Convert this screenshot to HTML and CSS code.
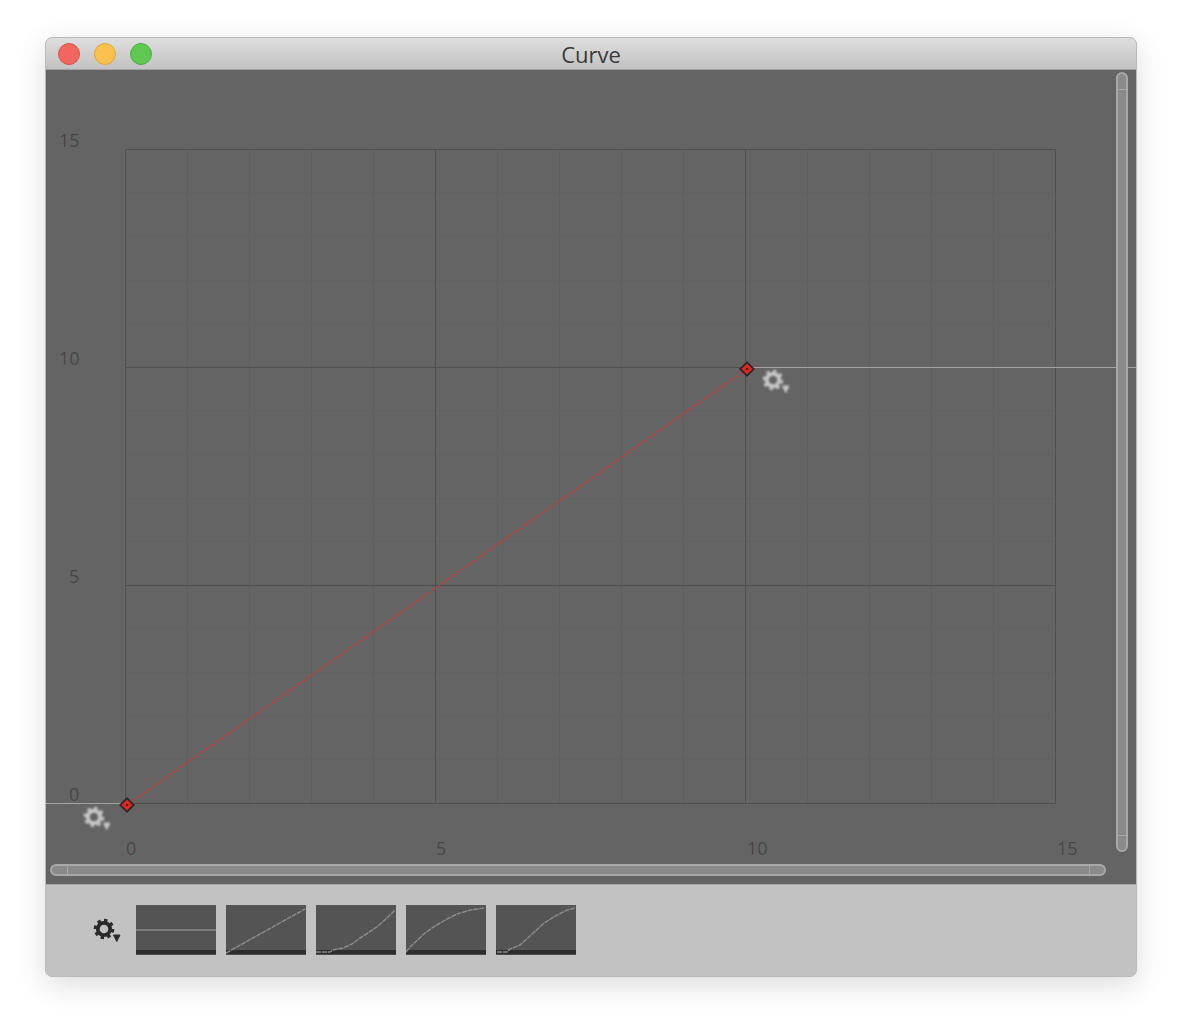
FILE: index.html
```html
<!DOCTYPE html>
<html lang="en">
<head>
<meta charset="utf-8">
<title>Curve</title>
<link rel="stylesheet" href="styles.css">
</head>
<body>
<svg class="defs" width="0" height="0" aria-hidden="true">
  <defs>
    <g id="gear">
      <circle class="gear-ring" cx="0" cy="0" r="6.200"/>
      <circle class="gear-teeth" cx="0" cy="0" r="8.500" pathLength="48"/>
      <path class="gear-tri" d="M9.500 6h6.500l-3.250 6.500z"/>
    </g>
  </defs>
</svg>
<main class="window">
  <header class="titlebar">
    <div class="lights">
      <span class="light light-close"></span>
      <span class="light light-min"></span>
      <span class="light light-max"></span>
    </div>
    <h1 class="title">Curve</h1>
  </header>
  <section class="graph">
    <svg class="plot" width="1090" height="814" viewBox="46 70 1090 814">
      <g class="minor-v">
        <path d="M187.500 149V803M249.500 149V803M311.500 149V803M373.500 149V803M497.500 149V803M559.500 149V803M621.500 149V803M683.500 149V803M807.500 149V803M869.500 149V803M931.500 149V803M993.500 149V803"/>
      </g>
      <g class="minor-h">
        <path d="M125 192.500H1055M125 236.500H1055M125 280.500H1055M125 323.500H1055M125 410.500H1055M125 454.500H1055M125 498.500H1055M125 541.500H1055M125 628.500H1055M125 672.500H1055M125 716.500H1055M125 759.500H1055"/>
      </g>
      <g class="major">
        <path d="M125.500 149.500H1055.500V803.500H125.500Z"/>
        <path d="M435.500 149V803M745.500 149V803M125 367.500H1055M125 585.500H1055"/>
      </g>
      <path class="limit" d="M46 803.500H125M747 367.500H1136"/>
      <path class="curve" d="M127 805L747 369"/>
      <g class="key">
        <path class="key-outer" d="M127 797l8 8-8 8-8-8z"/>
        <path class="key-inner" d="M127 799.500l5.500 5.500-5.500 5.500-5.500-5.500z"/>
        <circle class="key-dot" cx="127" cy="805" r="1.300"/>
      </g>
      <g class="key">
        <path class="key-outer" d="M747 361l8 8-8 8-8-8z"/>
        <path class="key-inner" d="M747 363.500l5.500 5.500-5.500 5.500-5.500-5.500z"/>
        <circle class="key-dot" cx="747" cy="369" r="1.300"/>
      </g>
      <use class="gear-light" href="#gear" x="94" y="817"/>
      <use class="gear-light" href="#gear" x="773" y="380"/>
      <g class="labels">
        <text x="59" y="147">15</text>
        <text x="59" y="365">10</text>
        <text x="69" y="583">5</text>
        <text x="69" y="801">0</text>
        <text x="126" y="855">0</text>
        <text x="436" y="855">5</text>
        <text x="747" y="855">10</text>
        <text x="1057" y="855">15</text>
      </g>
      <g class="scroll">
        <rect x="1117" y="73" width="10" height="778" rx="5"/>
        <path d="M1117 89.500H1127M1117 835.500H1127"/>
        <rect x="51" y="865" width="1054" height="10" rx="5"/>
        <path d="M67.500 865V875M1089.500 865V875"/>
      </g>
    </svg>
  </section>
  <footer class="presets">
    <svg class="gear-dark" width="32" height="30" viewBox="-12 -11 32 30"><use href="#gear"/></svg>
    <ul class="thumbs">
      <li class="thumb"><svg width="80" height="50" viewBox="0 0 80 50"><polyline class="flat" points="0,25 80,25"/></svg></li>
      <li class="thumb"><svg width="80" height="50" viewBox="0 0 80 50"><polyline points="0,48 79,4"/></svg></li>
      <li class="thumb"><svg width="80" height="50" viewBox="0 0 80 50"><polyline points="0,47 14,47 17,45 27,43 36,39 44,33 52,28 62,21 71,13 79,5"/></svg></li>
      <li class="thumb"><svg width="80" height="50" viewBox="0 0 80 50"><polyline points="0,47 4,42 19,28 29,21 41,14 51,9 64,5 79,3"/></svg></li>
      <li class="thumb"><svg width="80" height="50" viewBox="0 0 80 50"><polyline points="1,47 11,47 14,44 24,40 34,31 47,19 56,13 71,5 79,3"/></svg></li>
    </ul>
  </footer>
</main>
</body>
</html>
```
FILE: styles.css
```css
* { box-sizing: border-box; }

html, body { margin: 0; background: #fff; }

body {
  width: 1182px;
  height: 1030px;
  padding: 37px 45px 0;
  overflow: hidden;
  font-family: "Open Sans", "DejaVu Sans", sans-serif;
}

.defs { position: absolute; }

.window {
  width: 1092px;
  height: 940px;
  display: flex;
  flex-direction: column;
  border: 1px solid #bababa;
  border-radius: 7px;
  overflow: hidden;
  box-shadow: 0 8px 30px rgba(0, 0, 0, 0.14);
  background: #c2c2c2;
}

.titlebar {
  flex: none;
  height: 32px;
  display: grid;
  grid-template-columns: 1fr auto 1fr;
  align-items: center;
  padding-left: 12px;
  background: linear-gradient(#dedede, #c2c2c2);
  border-bottom: 1px solid #a4a4a4;
}

.lights { display: flex; gap: 14px; }

.light {
  width: 22px;
  height: 22px;
  border-radius: 50%;
  border: 1px solid;
}
.light-close { background: #f1665e; border-color: #d9534c; }
.light-min { background: #fac14f; border-color: #e2a63c; }
.light-max { background: #5ec850; border-color: #4cb040; }

.title {
  grid-column: 2;
  margin: 0 0 0 -12px;
  font-size: 22px;
  font-weight: 400;
  line-height: 30px;
  color: #3a3a3a;
}

.graph {
  flex: none;
  height: 815px;
  background: #646464;
  border-bottom: 1px solid #a6a6a6;
}

.plot { display: block; }

.minor-v path { fill: none; stroke: #5e5e5e; stroke-width: 1; }
.minor-h path { fill: none; stroke: #616161; stroke-width: 1; }
.major path { fill: none; stroke: #505050; stroke-width: 1; }
.limit { fill: none; stroke: #a3a3a3; stroke-width: 1; }
.curve { fill: none; stroke: #e6302a; stroke-width: 1.200; stroke-dasharray: 2.500 1.500; }

.key-outer { fill: #2c2626; filter: blur(0.3px); }
.key-inner { fill: #dc2a22; }
.key-dot { fill: #5a1512; }

.labels text {
  font-family: "Open Sans", "DejaVu Sans", sans-serif;
  font-size: 18px;
  fill: #474747;
}

.scroll rect { fill: #8a8a8a; stroke: #a8a8a8; stroke-width: 2; }
.scroll path { fill: none; stroke: #a8a8a8; stroke-width: 1; }

.gear-ring { fill: none; stroke-width: 3.800; }
.gear-teeth { fill: none; stroke-width: 3.600; stroke-dasharray: 3 3; }

.gear-light {
  stroke: #c8c8c8;
  fill: #c8c8c8;
  filter: blur(0.8px);
}

.presets {
  flex: 1;
  display: flex;
  align-items: flex-start;
  padding: 20px 0 0 46px;
  gap: 12px;
  background: #c2c2c2;
}

.gear-dark {
  margin-top: 13px;
  stroke: #2a2a2a;
  fill: #2a2a2a;
  filter: blur(0.5px);
}

.thumbs {
  display: flex;
  gap: 10px;
  margin: 0;
  padding: 0;
  list-style: none;
}

.thumb {
  width: 80px;
  height: 50px;
  background: linear-gradient(#545454 0 45px, #2e2e2e 45px 49px, #4c4c4c 49px);
}

.thumb svg { display: block; }

.thumb polyline {
  fill: none;
  stroke: #8a8a8a;
  stroke-width: 1.500;
  stroke-linejoin: round;
  stroke-dasharray: 5 0.800;
}

.thumb .flat { stroke-dasharray: none; }
```
